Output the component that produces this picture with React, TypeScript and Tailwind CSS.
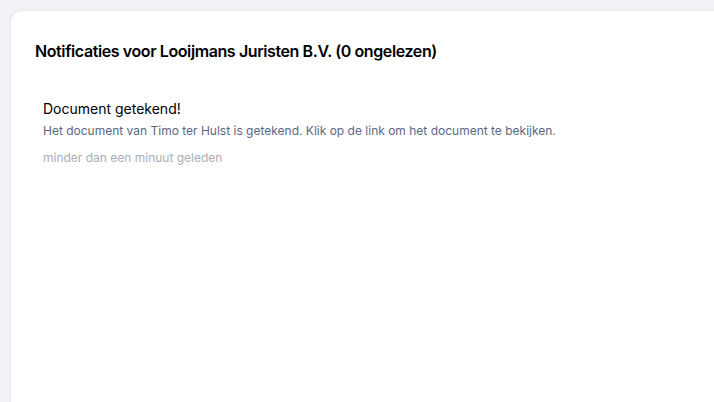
const notifications = [
  {
    id: 1,
    title: "Document getekend!",
    message:
      "Het document van Timo ter Hulst is getekend. Klik op de link om het document te bekijken.",
    time: "minder dan een minuut geleden",
  },
];

const App = () => {
  return (
    <div className="min-h-screen bg-[#f1f2f5] pl-[10px] pt-[10px] font-['Inter',sans-serif]">
      <div className="min-h-[392px] rounded-tl-xl border-l border-t border-[#e6e8ec] bg-white px-6 pt-[28px]">
        <h2 className="text-base font-semibold tracking-tight text-black">
          Notificaties voor Looijmans Juristen B.V. (0 ongelezen)
        </h2>
        <ul className="mt-[26px]">
          {notifications.map((n) => (
            <li key={n.id} className="px-2 py-2">
              <p className="text-sm leading-6 text-black">{n.title}</p>
              <p className="mt-[2px] text-xs text-[#5b6785]">{n.message}</p>
              <p className="mt-[11px] text-xs text-[#a9adb6]">{n.time}</p>
            </li>
          ))}
        </ul>
      </div>
    </div>
  );
};

export default App;
